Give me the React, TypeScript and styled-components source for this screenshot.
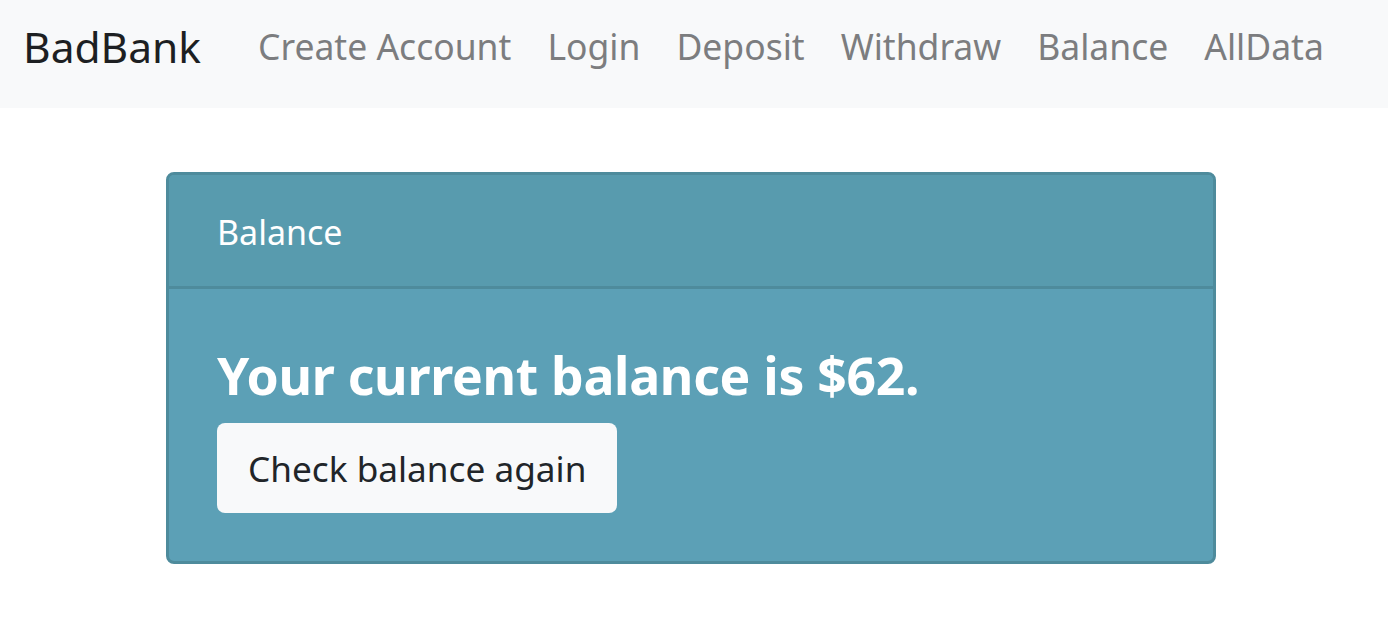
import React from "react";
import styled, { createGlobalStyle } from "styled-components";

const Global = createGlobalStyle`
  html, body { margin: 0; padding: 0; background: #ffffff; }
  body { font-family: "Noto Sans", "Open Sans", sans-serif; color: #212529; }
  * { box-sizing: border-box; }
`;

const Navbar = styled.nav`
  display: flex;
  align-items: center;
  height: 108px;
  background: #f8f9fa;
  padding: 0 0 16px 23px;
`;

const Brand = styled.a`
  font-size: 42.5px;
  color: #1d1f22;
  text-decoration: none;
  margin-right: 57px;
`;

const NavList = styled.div`
  display: flex;
  align-items: center;
  gap: 36px;
`;

const NavLink = styled.a`
  font-size: 35.5px;
  color: #7c7d7f;
  text-decoration: none;
`;

const Main = styled.main`
  padding: 64px 0 0 166px;
`;

const Card = styled.section`
  width: 1050px;
  background: #5ca0b6;
  border: 3px solid #4e8b9c;
  border-radius: 8px;
  overflow: hidden;
`;

const CardHeader = styled.header`
  background: #589bae;
  border-bottom: 3px solid #4e8b9c;
  height: 114px;
  display: flex;
  align-items: center;
  padding: 2px 0 0 48px;
  color: #ffffff;
  font-size: 34px;
`;

const CardBody = styled.div`
  padding: 55px 48px 48px 48px;
  display: flex;
  flex-direction: column;
  align-items: flex-start;
  gap: 17px;
`;

const Title = styled.h1`
  margin: 0;
  font-size: 51.7px;
  font-weight: 700;
  color: #ffffff;
  line-height: 1.2;
  letter-spacing: -0.3px;
`;

const Button = styled.button`
  font-family: inherit;
  font-size: 35.2px;
  color: #212529;
  background: #f8f9fa;
  border: none;
  border-radius: 8px;
  height: 90px;
  padding: 0 31px;
`;

const links = ["Create Account", "Login", "Deposit", "Withdraw", "Balance", "AllData"];

export default function App() {
  return (
    <>
      <Global />
      <Navbar>
        <Brand href="#">BadBank</Brand>
        <NavList>
          {links.map((l) => (
            <NavLink key={l} href="#">
              {l}
            </NavLink>
          ))}
        </NavList>
      </Navbar>
      <Main>
        <Card>
          <CardHeader>Balance</CardHeader>
          <CardBody>
            <Title>Your current balance is $62.</Title>
            <Button>Check balance again</Button>
          </CardBody>
        </Card>
      </Main>
    </>
  );
}
